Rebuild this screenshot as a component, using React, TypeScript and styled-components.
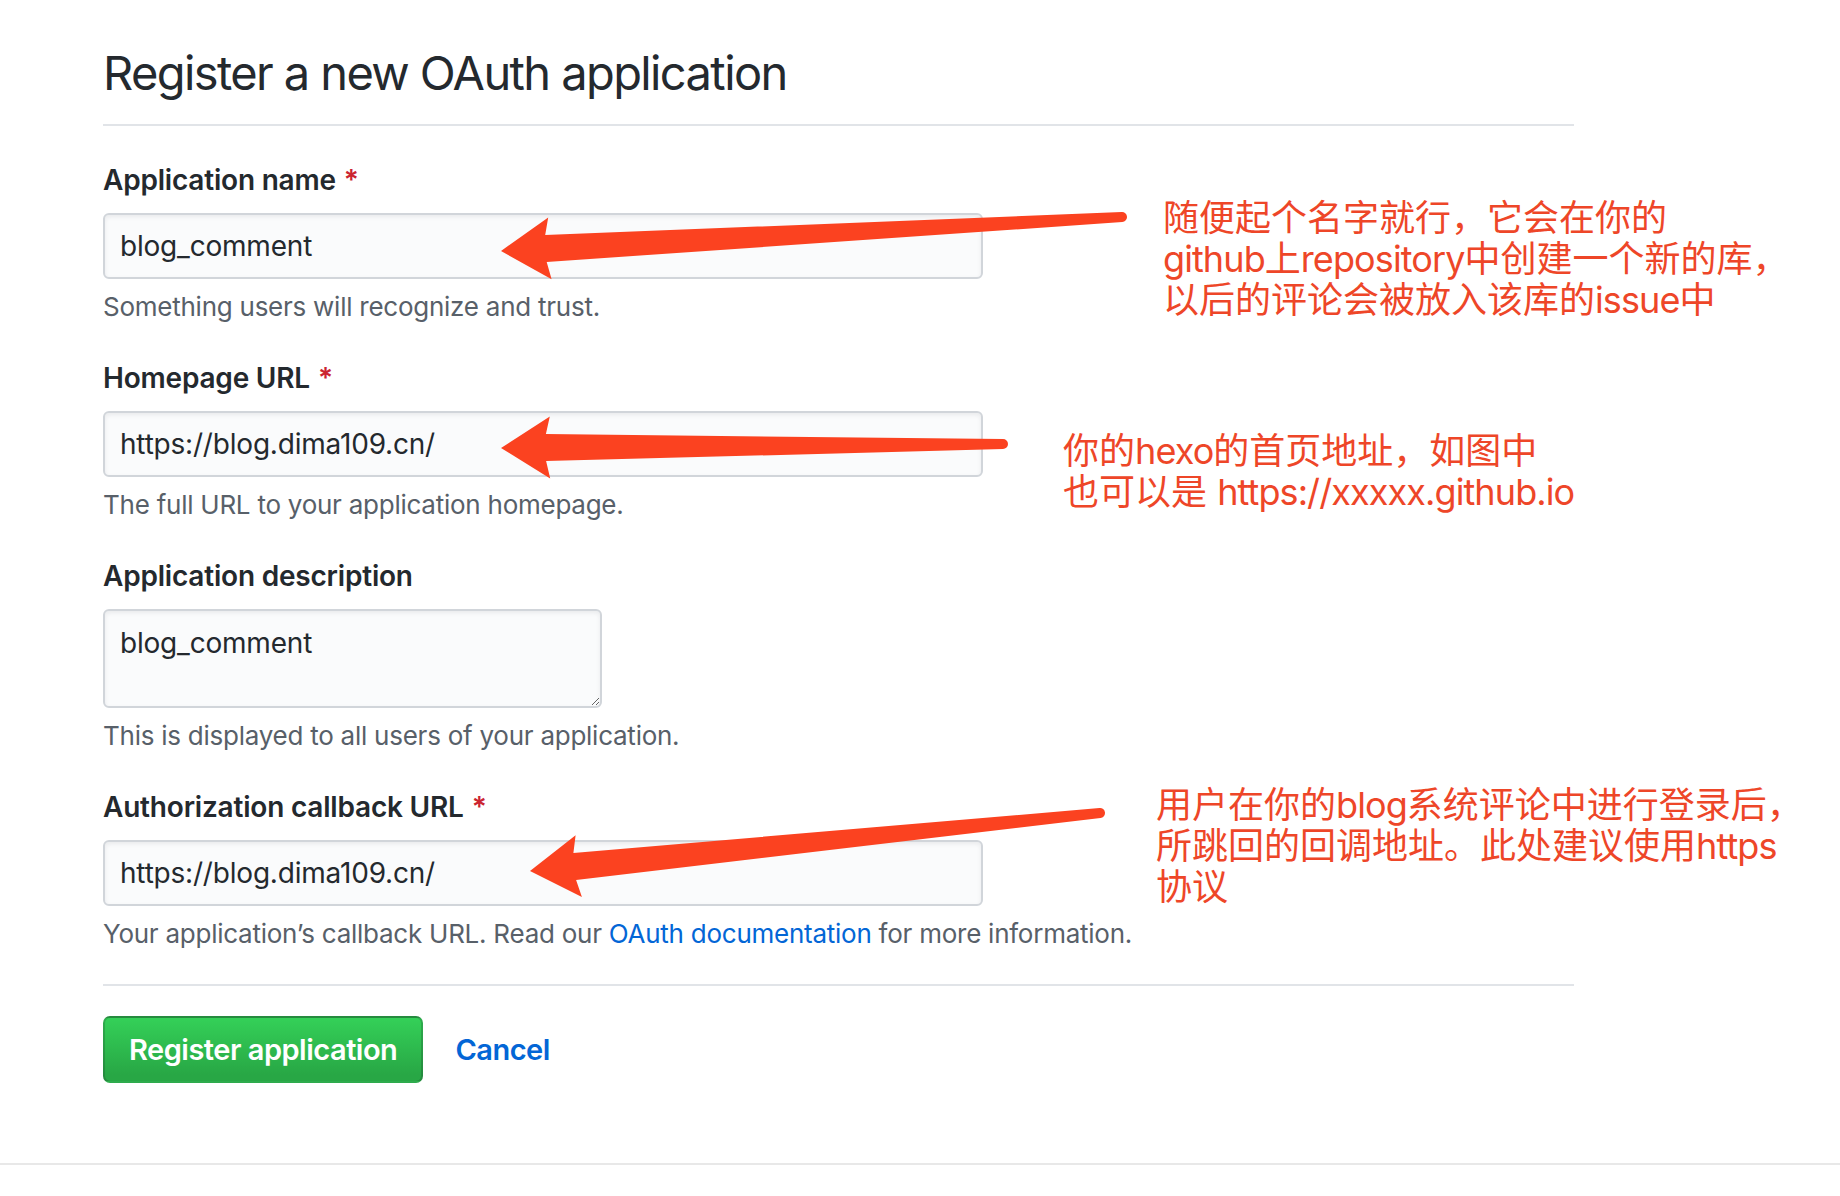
import React from "react";
import styled, { createGlobalStyle } from "styled-components";

const GlobalStyle = createGlobalStyle`
  html, body { margin: 0; padding: 0; background: #ffffff; }
  body {
    font-family: Inter, "Liberation Sans", "Noto Sans CJK SC", sans-serif;
    color: #24292e;
    -webkit-font-smoothing: antialiased;
  }
  * { box-sizing: border-box; }
`;

const Page = styled.div`
  position: relative;
  width: 1840px;
  height: 1196px;
  overflow: hidden;
  background: #fff;
`;

const Main = styled.main`
  width: 1574px;
  padding: 37px 0 0 103px;
`;

const Header = styled.div`
  border-bottom: 2px solid #e1e4e8;
  padding-bottom: 15px;
  margin-bottom: 33px;
`;

const Title = styled.h1`
  margin: 0;
  font-size: 47px;
  line-height: 72px;
  font-weight: 400;
  letter-spacing: -1.6px;
  color: #24292e;
`;

const Form = styled.form`
  display: flex;
  flex-direction: column;
`;

const FieldGroup = styled.div`
  display: flex;
  flex-direction: column;
  align-items: flex-start;
  margin-bottom: 31px;
`;

const Label = styled.label`
  display: block;
  font-size: 28px;
  line-height: 42px;
  font-weight: 600;
  letter-spacing: -0.2px;
  color: #24292e;
  margin-bottom: 12px;
`;

const Required = styled.span`
  color: #cb2431;
  margin-left: 8px;
`;

const TextInput = styled.input`
  width: 880px;
  height: 66px;
  padding: 0 15px;
  font-family: inherit;
  font-size: 28px;
  letter-spacing: -0.2px;
  color: #24292e;
  background: #fafbfc;
  border: 2px solid #d1d5da;
  border-radius: 6px;
  box-shadow: inset 0 2px 4px rgba(27, 31, 35, 0.075);
  outline: none;
`;

const TextArea = styled.textarea`
  width: 499px;
  height: 99px;
  padding: 12px 15px;
  font-family: inherit;
  font-size: 28px;
  line-height: 40px;
  letter-spacing: -0.2px;
  color: #24292e;
  background: #fafbfc;
  border: 2px solid #d1d5da;
  border-radius: 6px;
  box-shadow: inset 0 2px 4px rgba(27, 31, 35, 0.075);
  outline: none;
  resize: both;
`;

const Hint = styled.p`
  margin: 8px 0 0;
  font-size: 26px;
  line-height: 39px;
  letter-spacing: -0.25px;
  color: #586069;
`;

const Link = styled.a`
  color: #0366d6;
  text-decoration: none;
`;

const Divider = styled.hr`
  margin: 0 0 30px;
  border: 0;
  border-top: 2px solid #e1e4e8;
  height: 0;
`;

const Actions = styled.div`
  display: flex;
  align-items: center;
  gap: 32px;
`;

const PrimaryButton = styled.button`
  height: 67px;
  padding: 0 24px;
  font-family: inherit;
  font-size: 29px;
  font-weight: 600;
  letter-spacing: -0.5px;
  color: #ffffff;
  background: linear-gradient(180deg, #34d058 0%, #28a745 90%);
  border: 2px solid rgba(27, 31, 35, 0.2);
  border-radius: 7px;
  cursor: pointer;
`;

const CancelLink = styled.a`
  font-size: 29px;
  font-weight: 600;
  letter-spacing: -0.5px;
  color: #0366d6;
  text-decoration: none;
`;

const Footer = styled.footer`
  margin-top: 80px;
  width: 100%;
  border-top: 2px solid #e8e8e8;
`;

const Note = styled.div<{ $x: number; $y: number }>`
  position: absolute;
  left: ${(p) => p.$x}px;
  top: ${(p) => p.$y}px;
  font-family: Inter, "Noto Sans CJK SC", sans-serif;
  font-size: 36px;
  line-height: 42px;
  font-weight: 400;
  color: #ee4628;
  white-space: nowrap;
`;

const NoteLine = styled.div`
  display: block;
  height: 41px;
`;

const Latin = styled.span`
  letter-spacing: -0.9px;
`;

const Overlay = styled.svg`
  position: absolute;
  left: 0;
  top: 0;
  pointer-events: none;
`;

type P = [number, number];

function arrowPath(tip: P, tail: P, L = 49, W = 31, h1 = 13.5, h2 = 5): string {
  const dx = tip[0] - tail[0];
  const dy = tip[1] - tail[1];
  const len = Math.hypot(dx, dy);
  const ux = dx / len;
  const uy = dy / len;
  const nx = -uy;
  const ny = ux;
  const at = (along: number, side: number, o: P = tip) =>
    `${(o[0] - ux * along + nx * side).toFixed(1)} ${(o[1] - uy * along + ny * side).toFixed(1)}`;
  return [
    `M ${at(0, 0)}`,
    `L ${at(L, W)}`,
    `L ${at(L - 4, h1)}`,
    `L ${at(0, h2, tail)}`,
    `A ${h2} ${h2} 0 0 1 ${at(0, -h2, tail)}`,
    `L ${at(L - 4, -h1)}`,
    `L ${at(L, -W)}`,
    "Z",
  ].join(" ");
}

const arrows: { tip: P; tail: P }[] = [
  { tip: [501, 251], tail: [1122, 217] },
  { tip: [501, 448], tail: [1003, 444] },
  { tip: [530, 871], tail: [1100, 813] },
];

export default function App() {
  return (
    <>
      <GlobalStyle />
      <Page>
        <Main>
          <Header>
            <Title>Register a new OAuth application</Title>
          </Header>
          <Form onSubmit={(e) => e.preventDefault()}>
            <FieldGroup>
              <Label htmlFor="app-name">
                Application name<Required>*</Required>
              </Label>
              <TextInput id="app-name" readOnly value="blog_comment" />
              <Hint>Something users will recognize and trust.</Hint>
            </FieldGroup>
            <FieldGroup>
              <Label htmlFor="homepage">
                Homepage URL<Required>*</Required>
              </Label>
              <TextInput id="homepage" readOnly value="https://blog.dima109.cn/" />
              <Hint>The full URL to your application homepage.</Hint>
            </FieldGroup>
            <FieldGroup>
              <Label htmlFor="desc">Application description</Label>
              <TextArea id="desc" readOnly value="blog_comment" />
              <Hint>This is displayed to all users of your application.</Hint>
            </FieldGroup>
            <FieldGroup>
              <Label htmlFor="callback">
                Authorization callback URL<Required>*</Required>
              </Label>
              <TextInput id="callback" readOnly value="https://blog.dima109.cn/" />
              <Hint>
                Your application’s callback URL. Read our <Link href="#">OAuth documentation</Link> for more
                information.
              </Hint>
            </FieldGroup>
            <Divider />
            <Actions>
              <PrimaryButton type="submit">Register application</PrimaryButton>
              <CancelLink href="#">Cancel</CancelLink>
            </Actions>
          </Form>
        </Main>
        <Footer />

        <Overlay width={1840} height={1196} viewBox="0 0 1840 1196">
          {arrows.map((a, i) => (
            <path key={i} d={arrowPath(a.tip, a.tail)} fill="#fb4220" />
          ))}
        </Overlay>

        <Note $x={1163} $y={197}>
          <NoteLine>随便起个名字就行，它会在你的</NoteLine>
          <NoteLine>
            <Latin>github</Latin>上<Latin>repository</Latin>中创建一个新的库，
          </NoteLine>
          <NoteLine>
            以后的评论会被放入该库的<Latin>issue</Latin>中
          </NoteLine>
        </Note>
        <Note $x={1063} $y={430}>
          <NoteLine>
            你的<Latin>hexo</Latin>的首页地址，如图中
          </NoteLine>
          <NoteLine>
            也可以是 <Latin>https://xxxxx.github.io</Latin>
          </NoteLine>
        </Note>
        <Note $x={1156} $y={784}>
          <NoteLine>
            用户在你的<Latin>blog</Latin>系统评论中进行登录后，
          </NoteLine>
          <NoteLine>
            所跳回的回调地址。此处建议使用<Latin>https</Latin>
          </NoteLine>
          <NoteLine>协议</NoteLine>
        </Note>
      </Page>
    </>
  );
}
